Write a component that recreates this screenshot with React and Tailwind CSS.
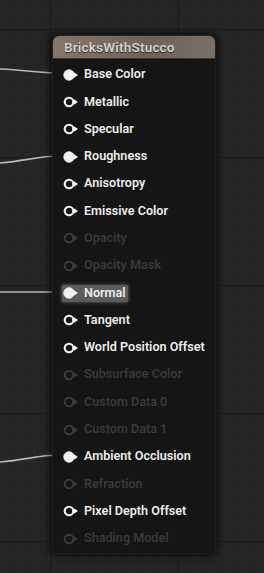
import React from "react";

const rows = [
  { label: "Base Color", state: "connected" },
  { label: "Metallic", state: "on" },
  { label: "Specular", state: "on" },
  { label: "Roughness", state: "connected" },
  { label: "Anisotropy", state: "on" },
  { label: "Emissive Color", state: "on" },
  { label: "Opacity", state: "off" },
  { label: "Opacity Mask", state: "off" },
  { label: "Normal", state: "connected", highlight: true },
  { label: "Tangent", state: "on" },
  { label: "World Position Offset", state: "on" },
  { label: "Subsurface Color", state: "off" },
  { label: "Custom Data 0", state: "off" },
  { label: "Custom Data 1", state: "off" },
  { label: "Ambient Occlusion", state: "connected" },
  { label: "Refraction", state: "off" },
  { label: "Pixel Depth Offset", state: "on" },
  { label: "Shading Model", state: "off" },
];

function Pin({ state }) {
  const color = state === "off" ? "#3a3a3a" : "#f2f2f2";
  const filled = state === "connected";
  return (
    <svg width="16" height="12" viewBox="0 0 16 12" className="shrink-0">
      <circle
        cx="6"
        cy="6"
        r={filled ? 5.4 : 4.3}
        fill={filled ? color : "#151515"}
        stroke={color}
        strokeWidth={filled ? 0.5 : 2.1}
      />
      <path d="M11 3.2 L15 6 L11 8.8 Z" fill={color} />
    </svg>
  );
}

export default function App() {
  return (
    <div
      className="relative w-[264px] h-[573px] overflow-hidden bg-[#252525] bg-[linear-gradient(#1c1c1c_1px,transparent_1px),linear-gradient(90deg,#1c1c1c_1px,transparent_1px),linear-gradient(#292929_1px,transparent_1px),linear-gradient(90deg,#292929_1px,transparent_1px)] bg-[length:128px_128px,128px_128px,16px_16px,16px_16px] bg-[position:0_29px,50px_0,0_13px,2px_0]"
      style={{ fontFamily: "Roboto, 'Liberation Sans', sans-serif" }}
    >
      <svg className="absolute inset-0" width="264" height="573">
        <g stroke="#b8b8b8" strokeWidth="1.6" fill="none">
          <path d="M0 69 C 25 70, 40 73, 58 73" />
          <path d="M0 163 C 25 161, 40 156, 58 156" />
          <path d="M0 292 L 58 292" />
          <path d="M0 462 C 25 460, 40 455, 58 455" />
        </g>
      </svg>

      <div className="absolute left-[52px] top-[35px] w-[164px] rounded-[6px] bg-[#151515] shadow-[0_0_6px_3px_rgba(0,0,0,0.55)] border border-[#202020]">
        <div className="h-[23px] rounded-t-[6px] bg-[linear-gradient(90deg,#85766a,#6e6258_60%,#7a6e65)] border-b border-[#3c342d] flex items-center pl-[11px]">
          <span className="text-[13.5px] font-semibold text-[#d8d2cc] tracking-[0.2px] [text-shadow:0_1px_1px_rgba(0,0,0,0.6)]">
            BricksWithStucco
          </span>
        </div>
        <div className="flex flex-col pt-[2px] pb-[1px]">
          {rows.map((r) => (
            <div key={r.label} className="h-[27.3px] flex items-center pl-[9px]">
              <div
                className={
                  r.highlight
                    ? "flex items-center gap-[5px] bg-[#5c5c5c] rounded-[2px] pl-[1px] pr-[2px] h-[17px] shadow-[0_0_3px_1px_#4a4a4a]"
                    : "flex items-center gap-[5px] pl-[1px]"
                }
              >
                <Pin state={r.state} />
                <span
                  className={
                    "text-[12.6px] font-semibold whitespace-nowrap " +
                    (r.state === "off" ? "text-[#393939]" : "text-[#ececec]")
                  }
                >
                  {r.label}
                </span>
              </div>
            </div>
          ))}
        </div>
      </div>
    </div>
  );
}
